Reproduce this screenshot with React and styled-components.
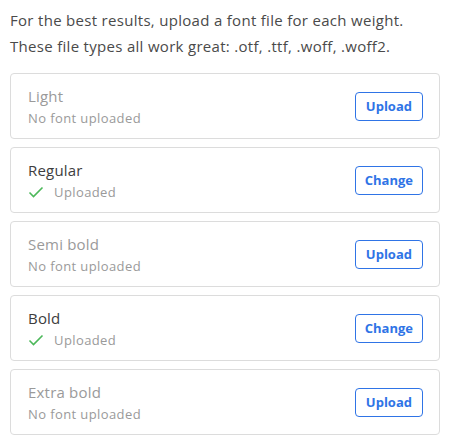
import React from 'react'
import styled, {createGlobalStyle} from 'styled-components'

const Global = createGlobalStyle`
body{
  margin:0;
  background:#fff;
  font-family:"Open Sans","Noto Sans",sans-serif;
}
`

const Wrapper = styled.div`
padding:7px 12px 0 10px;
`

const Intro = styled.p`
margin:0 0 14px;
font-size:15px;
line-height:26px;
letter-spacing:0.3px;
color:#4a4a4a;
`

const List = styled.div`
display:flex;
flex-direction:column;
gap:8px;
`

const Card = styled.div`
display:flex;
align-items:center;
justify-content:space-between;
height:66px;
box-sizing:border-box;
padding:0 16px 0 17px;
border:1px solid #dcdcdc;
border-radius:4px;
`

const Info = styled.div`
display:flex;
flex-direction:column;
gap:3px;
`

const Title = styled.div`
font-size:15px;
line-height:20px;
letter-spacing:0.2px;
color:${p => p.done ? '#3d3d3d' : '#9a9a9a'};
`

const Status = styled.div`
display:flex;
align-items:center;
gap:10px;
font-size:13px;
line-height:18px;
letter-spacing:0.4px;
color:#9a9a9a;
`

const Button = styled.button`
height:29px;
padding:0 ${p => p.wide ? '9px' : '10px'};
background:#fff;
border:1px solid #2f74e6;
border-radius:4px;
color:#2f74e6;
font-family:inherit;
font-size:13px;
font-weight:700;
cursor:pointer;
`

const Check = () => (
  <svg width="16" height="12" viewBox="0 0 16 12">
    <path d="M1.5 6.5 L5.5 10.5 L14.5 1.5" fill="none" stroke="#4cb85a" strokeWidth="1.6" />
  </svg>
)

const weights = [
  {id:1, name:'Light', done:false},
  {id:2, name:'Regular', done:true},
  {id:3, name:'Semi bold', done:false},
  {id:4, name:'Bold', done:true},
  {id:5, name:'Extra bold', done:false}
]

const App = () => (
  <Wrapper>
    <Global />
    <Intro>
      For the best results, upload a font file for each weight.<br />
      These file types all work great: .otf, .ttf, .woff, .woff2.
    </Intro>
    <List>
      {weights.map(item =>
        <Card key={item.id}>
          <Info>
            <Title done={item.done}>{item.name}</Title>
            {item.done
              ? <Status><Check />Uploaded</Status>
              : <Status>No font uploaded</Status>}
          </Info>
          <Button wide={item.done}>{item.done ? 'Change' : 'Upload'}</Button>
        </Card>
      )}
    </List>
  </Wrapper>
)

export default App
